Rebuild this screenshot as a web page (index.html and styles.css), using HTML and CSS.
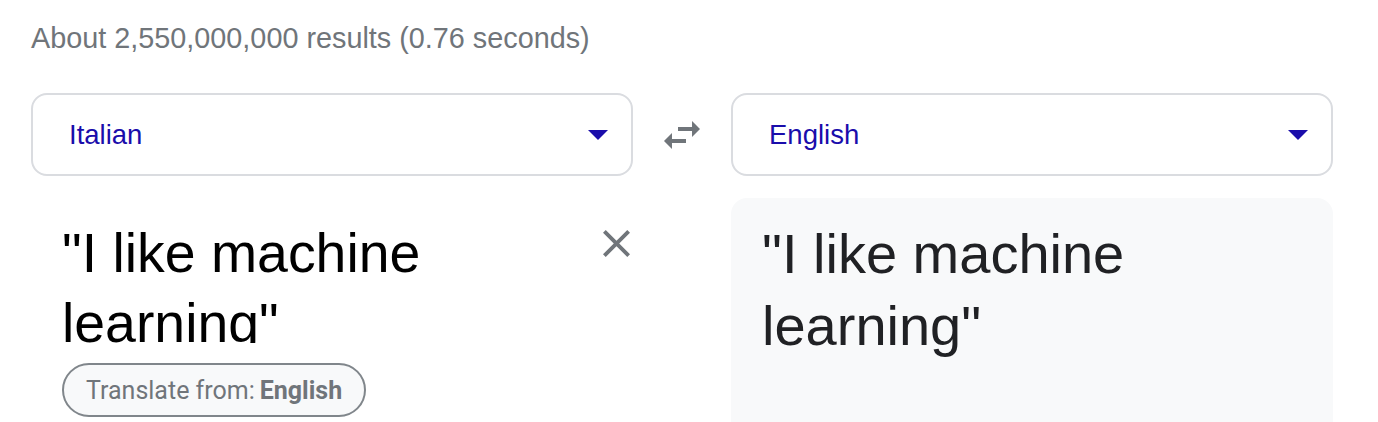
FILE: index.html
```html
<!DOCTYPE html>
<html lang="en">
<head>
<meta charset="utf-8">
<title>Translate</title>
<link rel="stylesheet" href="styles.css">
</head>
<body>
<div class="page">
  <div class="stats">About 2,550,000,000 results (0.76 seconds)</div>

  <div class="lang-row">
    <div class="select">
      <span class="select-label">Italian</span>
      <svg class="drop" viewBox="0 0 20 10" width="20" height="10"><polygon points="0,0 20,0 10,10" fill="#1a0dab"/></svg>
    </div>
    <div class="swap">
      <svg viewBox="0 0 24 24" width="48" height="48"><path fill="#70757a" d="M6.99 11L3 15l3.990 4v-3H14v-2H6.99v-3zM21 9l-3.99-4v3H10v2h7.01v3L21 9z"/></svg>
    </div>
    <div class="select">
      <span class="select-label">English</span>
      <svg class="drop" viewBox="0 0 20 10" width="20" height="10"><polygon points="0,0 20,0 10,10" fill="#1a0dab"/></svg>
    </div>
  </div>

  <div class="panels">
    <div class="source">
      <div class="source-top">
        <div class="source-text">"I like machine learning"</div>
        <svg class="clear" viewBox="5 5 14 14" width="27" height="27"><path fill="#70757a" d="M19 6.41L17.59 5 12 10.59 6.41 5 5 6.41 10.59 12 5 17.59 6.41 19 12 13.41 17.59 19 19 17.59 13.41 12z"/></svg>
      </div>
      <div class="chip">Translate from:<b>English</b></div>
    </div>
    <div></div>
    <div class="target">
      <div class="target-text">"I like machine learning"</div>
    </div>
  </div>
</div>
</body>
</html>
```

FILE: styles.css
```css
html, body {
  margin: 0;
  padding: 0;
  background: #ffffff;
  overflow: hidden;
}

body {
  font-family: "Liberation Sans", Arial, sans-serif;
}

.page {
  padding: 20px 0 0 31px;
}

.stats {
  font-size: 28.8px;
  line-height: 36px;
  color: #70757a;
}

.lang-row {
  margin-top: 37px;
  display: grid;
  grid-template-columns: 602px 98px 602px;
  align-items: center;
}

.select {
  box-sizing: border-box;
  height: 83px;
  border: 2px solid #dadce0;
  border-radius: 16px;
  display: flex;
  align-items: center;
  justify-content: space-between;
  padding: 0 23px 0 36px;
}

.select-label {
  font-size: 27.5px;
  color: #1a0dab;
}

.drop {
  display: block;
}

.swap {
  display: flex;
  justify-content: center;
}

.swap svg {
  display: block;
}

.panels {
  margin-top: 22px;
  display: grid;
  grid-template-columns: 602px 98px 602px;
  align-items: start;
}

.source {
  padding: 20px 3px 0 31px;
  display: flex;
  flex-direction: column;
  align-items: flex-start;
}

.source-top {
  display: flex;
  justify-content: space-between;
  align-self: stretch;
}

.source-text {
  width: 420px;
  font-size: 55.4px;
  line-height: 70px;
  height: 125px;
  overflow: hidden;
  color: #000000;
}

.clear {
  display: block;
  margin-top: 12px;
}

.chip {
  box-sizing: border-box;
  margin-top: 20px;
  height: 54px;
  padding: 0 22px;
  border: 2px solid #80868b;
  border-radius: 27px;
  background: #f8f9fa;
  display: inline-flex;
  align-items: center;
  font-family: Roboto, "Liberation Sans", sans-serif;
  font-size: 25px;
  color: #70757a;
  gap: 5px;
}

.chip b {
  font-weight: 700;
}

.target {
  background: #f8f9fa;
  border-radius: 16px 16px 0 0;
  min-height: 260px;
  padding: 20px 31px 0 31px;
}

.target-text {
  font-size: 56px;
  line-height: 72px;
  color: #202124;
  width: 440px;
}
```
